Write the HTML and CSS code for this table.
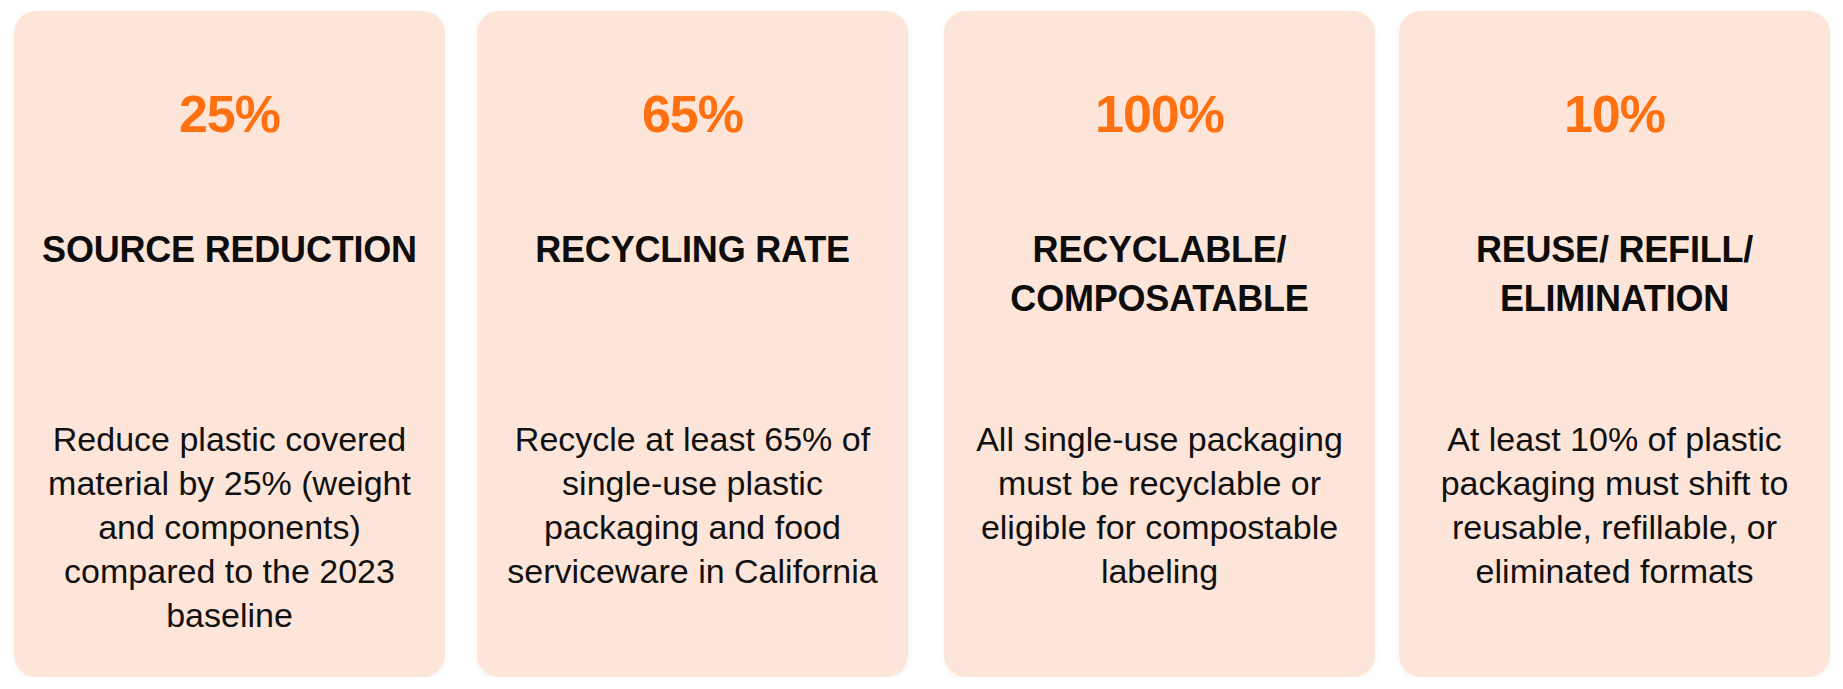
FILE: index.html
```html
<!DOCTYPE html>
<html lang="en">
<head>
<meta charset="utf-8">
<title>Packaging targets</title>
<link rel="stylesheet" href="styles.css">
</head>
<body>
<main class="targets">
  <section class="card">
    <div class="card-value">25%</div>
    <h2 class="card-title">SOURCE REDUCTION</h2>
    <p class="card-text">Reduce plastic covered material by 25% (weight and components) compared to the 2023 baseline</p>
  </section>
  <section class="card">
    <div class="card-value">65%</div>
    <h2 class="card-title">RECYCLING RATE</h2>
    <p class="card-text">Recycle at least 65% of single-use plastic packaging and food serviceware in California</p>
  </section>
  <section class="card card-third">
    <div class="card-value">100%</div>
    <h2 class="card-title">RECYCLABLE/ COMPOSATABLE</h2>
    <p class="card-text">All single-use packaging must be recyclable or eligible for compostable labeling</p>
  </section>
  <section class="card card-fourth">
    <div class="card-value">10%</div>
    <h2 class="card-title">REUSE/ REFILL/ ELIMINATION</h2>
    <p class="card-text">At least 10% of plastic packaging must shift to reusable, refillable, or eliminated formats</p>
  </section>
</main>
</body>
</html>
```
FILE: styles.css
```css
html, body {
  margin: 0;
  padding: 0;
  background: #ffffff;
}

body {
  font-family: "Liberation Sans", Arial, sans-serif;
  color: #111111;
}

.targets {
  display: flex;
  align-items: flex-start;
  gap: 32px;
  padding: 11px 0 0 14px;
}

.card {
  box-sizing: border-box;
  flex: 0 0 431px;
  width: 431px;
  height: 666px;
  padding: 73px 24px 0;
  background: #fde6d9;
  border-radius: 22px;
  box-shadow: 0 2px 5px rgba(120, 80, 60, 0.07);
  text-align: center;
}

.card-third {
  margin-left: 4px;
}

.card-fourth {
  margin-left: -8px;
}

.card-value {
  font-size: 52px;
  line-height: 60px;
  font-weight: 700;
  letter-spacing: -1px;
  color: #ff7010;
}

.card-title {
  margin: 81px 0 94px;
  height: 98px;
  font-size: 36px;
  line-height: 49px;
  font-weight: 700;
  letter-spacing: -0.2px;
  color: #0d0d0d;
}

.card-text {
  margin: 0;
  font-size: 34px;
  line-height: 44px;
  font-weight: 400;
  color: #111111;
}
```
